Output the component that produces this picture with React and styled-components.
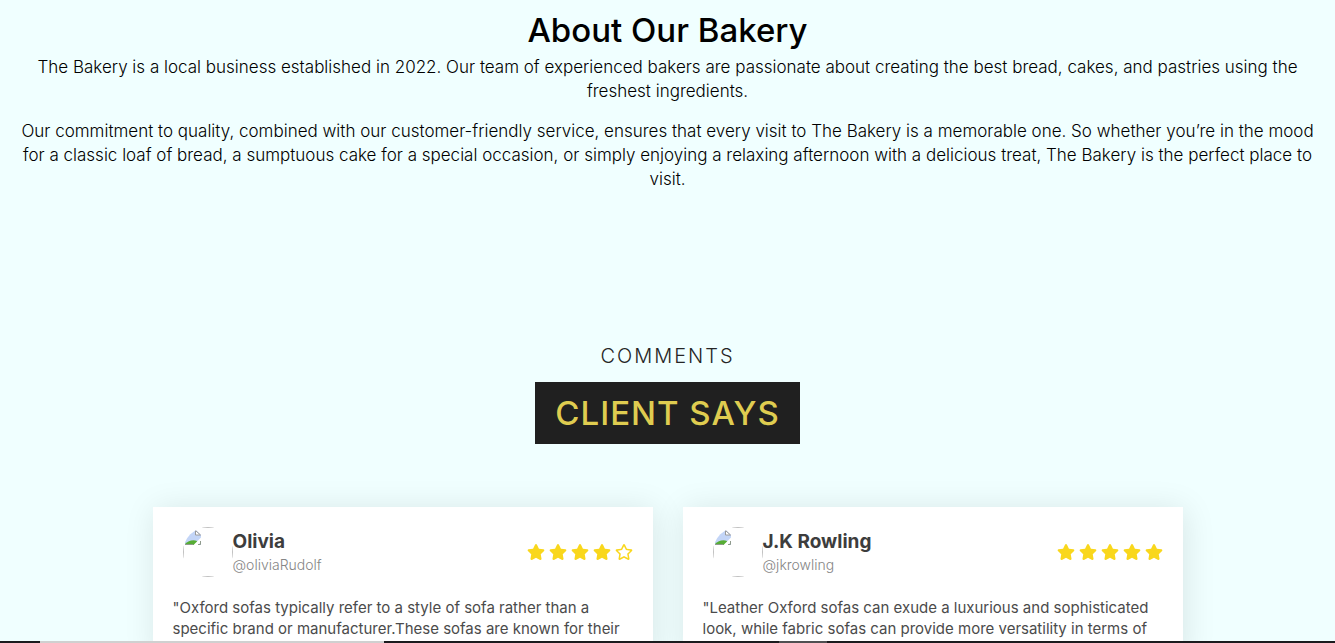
import React from 'react';
import styled, { createGlobalStyle } from 'styled-components';
import { FaStar, FaRegStar } from 'react-icons/fa';

const GlobalStyle = createGlobalStyle`
  *, *::before, *::after { box-sizing: border-box; }
  html { scrollbar-width: none; }
  body {
    margin: 0;
    background: #f0ffff;
    color: #000;
    font-family: Inter, "Open Sans", sans-serif;
    font-size: 17px;
    line-height: 24px;
  }
`;

const About = styled.section`
  padding: 11px 12px 0;
  text-align: center;
`;

const AboutTitle = styled.h2`
  margin: 0 0 6px;
  font-size: 33px;
  font-weight: 500;
  line-height: 38px;
`;

const AboutText = styled.p`
  margin: 0 0 16px;
  font-weight: 300;
`;

const Testimonials = styled.section`
  display: flex;
  flex-direction: column;
  align-items: center;
  padding-top: 134px;
`;

const Heading = styled.header`
  display: flex;
  flex-direction: column;
  align-items: center;
  gap: 11px;
  text-transform: uppercase;
`;

const Eyebrow = styled.span`
  color: #252525;
  font-size: 20px;
  font-weight: 300;
  line-height: 30px;
  letter-spacing: 2px;
`;

const HeadingTitle = styled.h2`
  margin: 0;
  padding: 10px 20px;
  background: #202020;
  color: #dfcc50;
  font-size: 33px;
  font-weight: 500;
  line-height: 42px;
  letter-spacing: 1px;
`;

const Cards = styled.div`
  display: flex;
  flex-wrap: wrap;
  justify-content: center;
  gap: 30px;
  width: 100%;
  padding: 63px 20px 30px;
`;

const Card = styled.article`
  width: 500px;
  max-width: 100%;
  padding: 20px;
  background: #fff;
  box-shadow: 2px 2px 30px rgba(0, 0, 0, 0.1);
`;

const CardTop = styled.div`
  display: flex;
  align-items: center;
  justify-content: space-between;
  margin-bottom: 20px;
`;

const Profile = styled.div`
  display: flex;
  align-items: center;
  padding-left: 10px;
`;

const Avatar = styled.svg`
  display: block;
  width: 50px;
  height: 50px;
  border-radius: 50%;
`;

const Names = styled.div`
  display: flex;
  flex-direction: column;
`;

const Name = styled.strong`
  color: #3d3d3d;
  font-size: 19px;
  font-weight: 700;
  line-height: 26px;
`;

const Handle = styled.span`
  color: #868686;
  font-size: 14px;
  font-weight: 300;
  line-height: 20px;
`;

const Stars = styled.div`
  display: flex;
  gap: 4px;
  color: #f9d71c;
  font-size: 18px;
`;

const Quote = styled.p`
  margin: 0;
  color: #4b4b4b;
  font-size: 15px;
  line-height: 21px;
`;

const BottomStrip = styled.div`
  position: fixed;
  inset: auto 0 0;
  display: flex;
  height: 2px;
  background: #1b1b1e;
`;

const StripPart = styled.span`
  width: ${({ $width }) => $width}px;
  background: ${({ $color }) => $color};
`;

const reviews = [
  {
    name: 'Olivia',
    handle: '@oliviaRudolf',
    rating: 4,
    quote:
      '"Oxford sofas typically refer to a style of sofa rather than a specific brand or manufacturer.These sofas are known for their',
  },
  {
    name: 'J.K Rowling',
    handle: '@jkrowling',
    rating: 5,
    quote:
      '"Leather Oxford sofas can exude a luxurious and sophisticated look, while fabric sofas can provide more versatility in terms of',
  },
];

function MissingPhoto() {
  return (
    <Avatar viewBox="0 0 50 50" aria-hidden="true">
      <rect x="0.5" y="0.5" width="49" height="49" fill="none" stroke="#c0c0c0" />
      <path d="M2 3h11l5 5v10H2z" fill="#c3d5f7" />
      <path d="M2 18v-1c3-3 8-5 12-3l2 4z" fill="#56ad35" />
      <path d="M10 18.500L18.500 10v4.500L14.500 18.500z" fill="#fff" />
      <path d="M12.500 3.500v4.500h5z" fill="#fff" stroke="#999" />
      <path d="M2 17.500h8M15 17.500h2.500V14" fill="none" stroke="#8f9a8c" />
    </Avatar>
  );
}

function Review({ name, handle, rating, quote }) {
  return (
    <Card>
      <CardTop>
        <Profile>
          <MissingPhoto />
          <Names>
            <Name>{name}</Name>
            <Handle>{handle}</Handle>
          </Names>
        </Profile>
        <Stars role="img" aria-label={`${rating} out of 5 stars`}>
          {[1, 2, 3, 4, 5].map((n) => (n <= rating ? <FaStar key={n} /> : <FaRegStar key={n} />))}
        </Stars>
      </CardTop>
      <Quote>{quote}</Quote>
    </Card>
  );
}

export default function App() {
  return (
    <>
      <GlobalStyle />
      <main>
        <About>
          <AboutTitle>About Our Bakery</AboutTitle>
          <AboutText>
            The Bakery is a local business established in 2022. Our team of experienced bakers are
            passionate about creating the best bread, cakes, and pastries using the freshest
            ingredients.
          </AboutText>
          <AboutText>
            Our commitment to quality, combined with our customer-friendly service, ensures that
            every visit to The Bakery is a memorable one. So whether you’re in the mood for a
            classic loaf of bread, a sumptuous cake for a special occasion, or simply enjoying a
            relaxing afternoon with a delicious treat, The Bakery is the perfect place to visit.
          </AboutText>
        </About>
        <Testimonials>
          <Heading>
            <Eyebrow>Comments</Eyebrow>
            <HeadingTitle>Client Says</HeadingTitle>
          </Heading>
          <Cards>
            {reviews.map((review) => (
              <Review key={review.handle} {...review} />
            ))}
          </Cards>
        </Testimonials>
      </main>
      <BottomStrip aria-hidden="true">
        <StripPart $width={40} $color="#1b1b1e" />
        <StripPart $width={344} $color="#d0d0d0" />
        <StripPart $width={395} $color="#1b1b1e" />
        <StripPart $width={48} $color="#505052" />
      </BottomStrip>
    </>
  );
}
